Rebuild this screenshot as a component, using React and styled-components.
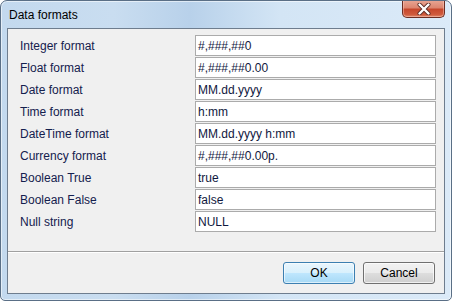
import React from "react";
import styled, { createGlobalStyle } from "styled-components";

const Global = createGlobalStyle`
  html, body { margin: 0; padding: 0; background: #ffffff; }
  body { font-family: "Liberation Sans", Arial, sans-serif; }
  * { box-sizing: border-box; }
`;

const Window = styled.div`
  width: 452px;
  height: 301px;
  display: flex;
  flex-direction: column;
  border: 1px solid #5a6f86;
  border-radius: 7px 7px 5px 5px;
  background: linear-gradient(
    to right,
    #c3d9ee 0%,
    #c9ddf0 25%,
    #b8d1ea 42%,
    #d3e5f5 62%,
    #dbeaf8 100%
  );
  box-shadow: inset 0 0 0 1px rgba(255, 255, 255, 0.55);
  overflow: hidden;
`;

const TitleBar = styled.div`
  height: 27px;
  flex: none;
  display: flex;
  align-items: flex-start;
  padding-left: 8px;
`;

const Title = styled.span`
  font-size: 12px;
  line-height: 12px;
  margin-top: 8px;
  color: #000;
`;

const CloseButton = styled.div`
  margin-left: auto;
  margin-right: 6px;
  margin-top: -1px;
  width: 43px;
  height: 18px;
  display: flex;
  align-items: center;
  justify-content: center;
  border: 1px solid #6b2d22;
  border-top: none;
  border-radius: 0 0 5px 5px;
  background: linear-gradient(
    to bottom,
    #e9a795 0%,
    #dd8670 45%,
    #c7472c 55%,
    #cf5a3c 85%,
    #e0896b 100%
  );
  box-shadow: inset 0 0 0 1px rgba(255, 210, 200, 0.45);
`;

const Client = styled.div`
  flex: 1;
  margin: 0 6px 6px 6px;
  border: 1px solid #6e7d8e;
  background: #f0f0f0;
  display: flex;
  flex-direction: column;
`;

const Form = styled.div`
  flex: 1;
  display: grid;
  grid-template-columns: 175px 241px;
  grid-auto-rows: 21px;
  row-gap: 1px;
  padding: 6px 8px 0 12px;
  align-content: start;
`;

const Label = styled.div`
  display: flex;
  align-items: center;
  font-size: 12px;
  color: #14204e;
  padding-top: 1px;
`;

const Field = styled.div`
  display: flex;
  align-items: center;
  border: 1px solid #ababab;
  background: #ffffff;
  padding: 1px 0 0 2px;
  font-size: 12px;
  color: #10183e;
  white-space: nowrap;
  overflow: hidden;
`;

const Footer = styled.div`
  flex: none;
  height: 42px;
  border-top: 1px solid #a0a0a0;
  box-shadow: inset 0 1px 0 #ffffff;
  display: flex;
  justify-content: flex-end;
  align-items: flex-start;
  gap: 8px;
  padding: 10px 9px 0 0;
`;

const Button = styled.div`
  width: 72px;
  height: 22px;
  display: flex;
  align-items: center;
  justify-content: center;
  font-size: 12px;
  color: #000;
  border-radius: 3px;
  border: 1px solid ${(p) => (p.$default ? "#3c7fb1" : "#707070")};
  background: ${(p) =>
    p.$default
      ? "linear-gradient(to bottom, #eaf6fd 0%, #d9f0fc 48%, #bee6fd 52%, #a7d9f5 100%)"
      : "linear-gradient(to bottom, #f2f2f2 0%, #ebebeb 48%, #dddddd 52%, #cfcfcf 100%)"};
  box-shadow: inset 0 0 0 1px
    ${(p) => (p.$default ? "rgba(255,255,255,0.6)" : "rgba(255,255,255,0.7)")};
`;

const rows = [
  ["Integer format", "#,###,##0"],
  ["Float format", "#,###,##0.00"],
  ["Date format", "MM.dd.yyyy"],
  ["Time format", "h:mm"],
  ["DateTime format", "MM.dd.yyyy h:mm"],
  ["Currency format", "#,###,##0.00p."],
  ["Boolean True", "true"],
  ["Boolean False", "false"],
  ["Null string", "NULL"],
];

export default function App() {
  return (
    <>
      <Global />
      <Window>
        <TitleBar>
          <Title>Data formats</Title>
          <CloseButton>
            <svg width="14" height="12" viewBox="0 0 14 12">
              <path
                d="M2.5 1.5 L11.5 10.5 M11.5 1.5 L2.5 10.5"
                stroke="#5a2a22"
                strokeWidth="4"
                strokeLinecap="round"
              />
              <path
                d="M2.5 1.5 L11.5 10.5 M11.5 1.5 L2.5 10.5"
                stroke="#ffffff"
                strokeWidth="2.4"
                strokeLinecap="round"
              />
            </svg>
          </CloseButton>
        </TitleBar>
        <Client>
          <Form>
            {rows.map(([label, value]) => (
              <React.Fragment key={label}>
                <Label>{label}</Label>
                <Field>{value}</Field>
              </React.Fragment>
            ))}
          </Form>
          <Footer>
            <Button $default>OK</Button>
            <Button>Cancel</Button>
          </Footer>
        </Client>
      </Window>
    </>
  );
}
